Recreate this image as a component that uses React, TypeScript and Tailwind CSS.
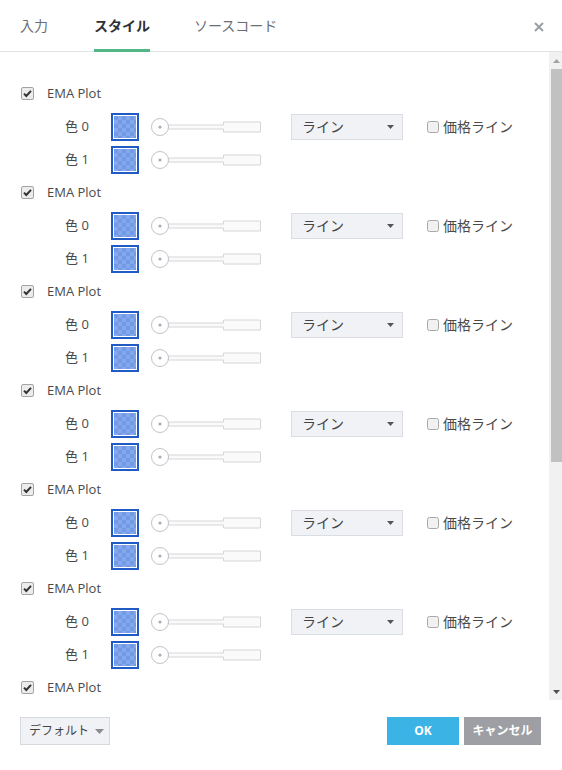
import React from "react";

const font = { fontFamily: '"Open Sans", "Noto Sans CJK JP", sans-serif' };

function CheckedBox() {
  return (
    <svg width="13" height="13" viewBox="0 0 13 13" className="shrink-0">
      <rect x="0.5" y="0.5" width="12" height="12" rx="1.5" fill="#ececec" stroke="#a3a3a3" />
      <path d="M3 6.6 L5.3 9 L10 3.8" fill="none" stroke="#333" strokeWidth="2" />
    </svg>
  );
}

function EmptyBox() {
  return (
    <svg width="12" height="12" viewBox="0 0 12 12" className="shrink-0">
      <rect x="0.5" y="0.5" width="11" height="11" rx="2" fill="#f1f1f1" stroke="#a8a8a8" />
    </svg>
  );
}

function Swatch({ id }: { id: string }) {
  return (
    <div className="w-[28px] h-[28px] border-2 border-[#1f5ac7] p-px bg-white shrink-0">
      <svg width="22" height="22" viewBox="0 0 22 22" className="block">
        <defs>
          <pattern id={id} width="8" height="8" patternUnits="userSpaceOnUse">
            <rect width="8" height="8" fill="#83a8ec" />
            <rect width="4" height="4" fill="#729ae6" />
            <rect x="4" y="4" width="4" height="4" fill="#729ae6" />
          </pattern>
        </defs>
        <rect width="22" height="22" fill={`url(#${id})`} />
      </svg>
    </div>
  );
}

function Slider() {
  return (
    <svg width="112" height="20" viewBox="0 0 112 20" className="shrink-0">
      <path
        d="M17.5 8 H72.5 V5 H109.5 V15 H72.5 V12 H17.5 Z"
        fill="#fafafa"
        stroke="#d6d6d6"
      />
      <circle cx="9" cy="10" r="8.5" fill="#fff" stroke="#bfc3ca" />
      <circle cx="9" cy="10" r="1.6" fill="#a9adb3" />
    </svg>
  );
}

function Group({ n, headerOnly }: { n: number; headerOnly?: boolean }) {
  return (
    <div>
      <div className="h-[33px] flex items-center pl-[21px] gap-[13px]">
        <CheckedBox />
        <span className="text-[13px] text-[#4a4a4a]">EMA Plot</span>
      </div>
      {!headerOnly && (
        <>
          <div className="h-[33px] flex items-center pl-[65px]">
            <span className="w-[46px] text-[13px] text-[#4a4a4a]">色 0</span>
            <Swatch id={`p${n}a`} />
            <div className="ml-[12px]">
              <Slider />
            </div>
            <div className="ml-[28px] w-[112px] h-[26px] bg-[#f1f2f6] border border-[#dadde3] flex items-center justify-between pl-[10px] pr-[8px]">
              <span className="text-[14px] text-[#444]">ライン</span>
              <svg width="7" height="4" viewBox="0 0 7 4">
                <path d="M0 0 H7 L3.5 4 Z" fill="#555" />
              </svg>
            </div>
            <div className="ml-[24px] flex items-center gap-[4px]">
              <EmptyBox />
              <span className="text-[14px] text-[#4a4a4a]">価格ライン</span>
            </div>
          </div>
          <div className="h-[33px] flex items-center pl-[65px]">
            <span className="w-[46px] text-[13px] text-[#4a4a4a]">色 1</span>
            <Swatch id={`p${n}b`} />
            <div className="ml-[12px]">
              <Slider />
            </div>
          </div>
        </>
      )}
    </div>
  );
}

export default function App() {
  const groups = [0, 1, 2, 3, 4, 5, 6];
  return (
    <div className="w-[562px] h-[770px] bg-white flex flex-col overflow-hidden" style={font}>
      <div className="h-[52px] border-b border-[#e1e3e7] flex items-stretch pl-[20px] pr-[16px] shrink-0">
        <div className="flex items-center border-b-[3px] border-transparent text-[14px] text-[#6b6e74] mr-[46px] pt-[2px]">
          入力
        </div>
        <div className="flex items-center border-b-[3px] border-[#52b788] text-[14px] font-bold text-[#2e3035] mr-[44px] pt-[2px] -mb-px">
          スタイル
        </div>
        <div className="flex items-center border-b-[3px] border-transparent text-[14px] text-[#6b6e74] pt-[2px]">
          ソースコード
        </div>
        <div className="ml-auto flex items-center pt-[2px] pr-[2px]">
          <svg width="10" height="10" viewBox="0 0 10 10">
            <path d="M1 1 L9 9 M9 1 L1 9" stroke="#9a9ea5" strokeWidth="2" />
          </svg>
        </div>
      </div>

      <div className="flex flex-1 min-h-0">
        <div className="flex-1 overflow-hidden pt-[25px]">
          {groups.map((g) => (
            <Group key={g} n={g} headerOnly={g === groups.length - 1} />
          ))}
        </div>
        <div className="w-[13px] bg-[#f1f1f1] flex flex-col items-end">
          <div className="h-[17px] w-full flex items-center justify-center pl-[2px]">
            <svg width="7" height="4" viewBox="0 0 7 4">
              <path d="M0 4 H7 L3.5 0 Z" fill="#a3a3a3" />
            </svg>
          </div>
          <div className="w-[11px] h-[393px] bg-[#c1c1c1]" />
          <div className="flex-1" />
          <div className="h-[17px] w-full flex items-center justify-center pl-[2px]">
            <svg width="7" height="4" viewBox="0 0 7 4">
              <path d="M0 0 H7 L3.5 4 Z" fill="#505050" />
            </svg>
          </div>
        </div>
      </div>

      <div className="h-[70px] shrink-0 flex items-start pt-[17px] pl-[20px] pr-[21px]">
        <div className="h-[28px] w-[90px] bg-[#f1f2f6] border border-[#d6d9de] flex items-center pl-[8px] gap-[6px]">
          <span className="text-[12px] leading-none whitespace-nowrap text-[#444]">デフォルト</span>
          <svg width="9" height="5" viewBox="0 0 9 5" className="shrink-0">
            <path d="M0 0 H9 L4.5 5 Z" fill="#8a8c90" />
          </svg>
        </div>
        <div className="ml-auto flex gap-[5px]">
          <div className="h-[28px] w-[72px] bg-[#3bb3e4] flex items-center justify-center text-[12px] leading-none font-bold text-white">
            OK
          </div>
          <div className="h-[28px] w-[77px] bg-[#9d9fa4] flex items-center justify-center text-[12px] leading-none whitespace-nowrap font-bold text-white">
            キャンセル
          </div>
        </div>
      </div>
    </div>
  );
}
